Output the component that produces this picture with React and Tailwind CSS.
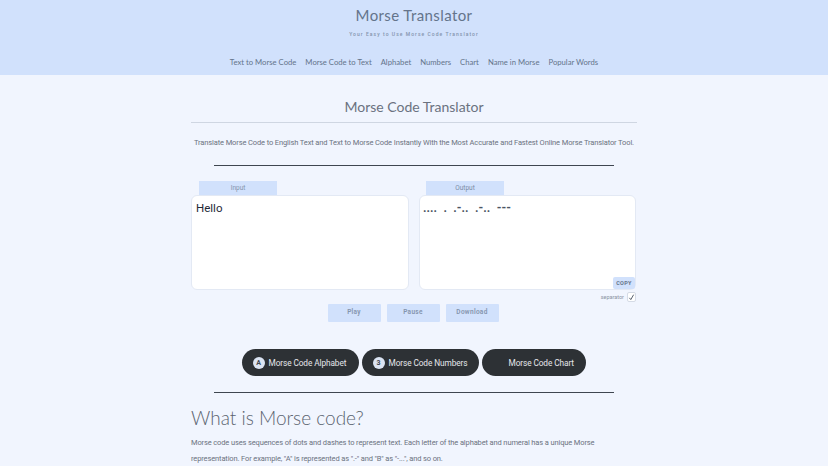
import React, { useState } from 'react'

const navLinks = ['Text to Morse Code', 'Morse Code to Text', 'Alphabet', 'Numbers', 'Chart', 'Name in Morse', 'Popular Words']

const App = () => {
  const [input, setInput] = useState('Hello')

  return (
    <div className="h-[466px] overflow-hidden bg-[#f1f5fe] font-['Roboto',sans-serif] text-[#6b7280]">
      {/* Header */}
      <header className="h-[75px] bg-[#d1e1fc] flex flex-col items-center">
        <h1 className="mt-[5px] h-[21px] leading-[21px] text-[15px] tracking-[0.4px] text-[#64748b] font-['Lato',sans-serif]">Morse Translator</h1>
        <p className="mt-[3px] h-[10px] leading-[10px] text-[5px] tracking-[1.05px] font-medium text-[#8494ad]">Your Easy to Use Morse Code Translator</p>
        <nav className="mt-[17px] flex gap-[9px] text-[7.7px] leading-[12px] text-[#64748b] font-['Lato',sans-serif]">
          {navLinks.map((link) => (
            <a key={link}>{link}</a>
          ))}
        </nav>
      </header>

      <main className="w-[446px] ml-[191px]">
        {/* Title */}
        <h2 className="mt-[22px] pb-[5px] text-center text-[14px] leading-[20px] text-[#6b7280] font-['Lato',sans-serif] border-b border-[#cfd6e2]">Morse Code Translator</h2>
        <p className="mt-[14px] text-center text-[7.5px] tracking-[-0.12px] leading-[12px] whitespace-nowrap text-[#6b7280]">Translate Morse Code to English Text and Text to Morse Code Instantly With the Most Accurate and Fastest Online Morse Translator Tool.</p>
        <hr className="mt-[16px] mx-[23px] border-0 h-px bg-[#3f4650]" />

        {/* Translator */}
        <div className="mt-[15px] flex gap-[10px]">
          <div className="w-[218px]">
            <div className="ml-2 w-[78px] h-[14px] bg-[#d1e1fc] text-center text-[6.5px] leading-[14px] text-[#8494ad]">Input</div>
            <textarea
              value={input}
              onChange={(e) => setInput(e.target.value)}
              className="block w-full h-[95px] px-[4px] py-[3px] resize-none bg-white rounded-[6px] border border-[#e3e9f4] text-[11.5px] leading-[18px] text-[#1f2937] outline-none"
            />
          </div>
          <div className="w-[217px]">
            <div className="ml-[7px] w-[78px] h-[14px] bg-[#d1e1fc] text-center text-[6.5px] leading-[14px] text-[#7c8ca6]">Output</div>
            <div className="relative h-[95px] bg-white rounded-[6px] border border-[#e3e9f4] px-[3px] py-[3px] text-[12px] leading-[18px] font-bold [word-spacing:3.5px] text-[#4b5563] whitespace-pre">
              .... . .-.. .-.. ---
              <button className="absolute right-0 bottom-0 w-[22px] h-[12px] bg-[#d1e1fc] rounded-[2px] text-[5.5px] leading-[12px] font-bold tracking-[0.3px] [word-spacing:0] text-[#64748b]">COPY</button>
            </div>
            <div className="mt-[2px] flex items-center justify-end gap-[3px]">
              <span className="text-[5.5px] leading-[9px] text-[#8b94a3]">separator</span>
              <span className="w-[9px] h-[10px] bg-white rounded-[2px] border border-[#d5dbe6] flex items-center justify-center">
                <svg viewBox="0 0 10 10" className="w-[9px] h-[9px]" fill="none" stroke="#374151" strokeWidth="1.2">
                  <path d="M2 5.5 L4 8 L8 1" />
                </svg>
              </span>
            </div>
          </div>
        </div>

        {/* Player */}
        <div className="mt-[2px] flex justify-center gap-[6px] pr-[2px]">
          {['Play', 'Pause', 'Download'].map((label) => (
            <button key={label} className="w-[53px] h-[18px] bg-[#d1e1fc] rounded-[1px] text-[6.5px] font-semibold tracking-[0.3px] text-[#8494ad]">{label}</button>
          ))}
        </div>

        {/* Links */}
        <div className="mt-[27px] flex justify-center gap-[3px] pr-[1px] text-[8.3px] tracking-[-0.1px] text-[#e5e7eb]">
          <a className="w-[117px] h-[27px] pt-px bg-[#2d3135] rounded-[14px] flex items-center pl-[11px] gap-[4px]">
            <span className="w-[12px] h-[12px] rounded-full bg-[#dbe4f3] text-[#3f4650] text-[7px] font-bold flex items-center justify-center">A</span>
            Morse Code Alphabet
          </a>
          <a className="w-[117px] h-[27px] pt-px bg-[#2d3135] rounded-[14px] flex items-center pl-[11px] gap-[4px]">
            <span className="w-[12px] h-[12px] rounded-full bg-[#dbe4f3] text-[#3f4650] text-[7px] font-bold flex items-center justify-center">3</span>
            Morse Code Numbers
          </a>
          <a className="w-[104px] h-[27px] pt-px bg-[#2d3135] rounded-[14px] flex items-center pl-[27px]">Morse Code Chart</a>
        </div>

        <hr className="mt-[16px] mx-[23px] border-0 h-px bg-[#3f4650]" />

        {/* About */}
        <h2 className="mt-[13px] text-[19px] leading-[24px] font-light text-[#5b6470] font-['Lato',sans-serif]">What is Morse code?</h2>
        <p className="mt-[5px] text-[7.5px] tracking-[-0.13px] leading-[16px] text-[#6b7280]">Morse code uses sequences of dots and dashes to represent text. Each letter of the alphabet and numeral has a unique Morse representation. For example, "A" is represented as ".-" and "B" as "-...", and so on.</p>
      </main>
    </div>
  )
}

export default App
